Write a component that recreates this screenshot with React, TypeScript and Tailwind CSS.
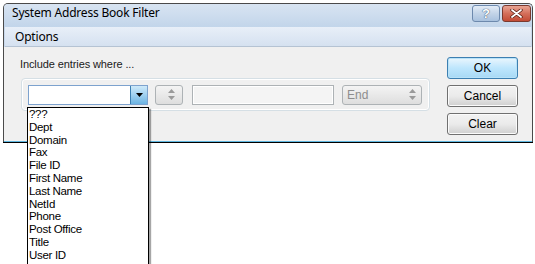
import React from 'react';

const fields = ['???', 'Dept', 'Domain', 'Fax', 'File ID', 'First Name', 'Last Name', 'NetId', 'Phone', 'Post Office', 'Title', 'User ID'];

function UpDown() {
    return (
        <svg width="7" height="11" viewBox="0 0 7 11">
            <polygon points="0,4 3.5,0 7,4" fill="#9a9a9a" />
            <polygon points="0,7 3.5,11 7,7" fill="#9a9a9a" />
        </svg>
    );
}

function WinButton({ label, primary }: { label: string; primary?: boolean }) {
    return (
        <button
            className={
                primary
                    ? 'h-[22px] w-[71px] rounded-[3px] border border-[#3c7fb1] bg-gradient-to-b from-[#eaf6fd] via-[#bee6fd] to-[#a7d9f5] text-[12px] text-black shadow-[inset_0_0_0_1px_#b8e2f8]'
                    : 'h-[22px] w-[71px] rounded-[3px] border border-[#707070] bg-gradient-to-b from-[#f2f2f2] via-[#ebebeb] to-[#cfcfcf] text-[12px] text-black shadow-[inset_0_0_0_1px_#fbfbfb]'
            }
        >
            {label}
        </button>
    );
}

export default function App() {
    return (
        <div className="relative w-[535px] h-[264px] bg-white font-['Liberation_Sans',Arial,sans-serif] text-black">
            {/* window */}
            <div className="ml-[3px] mt-[3px] w-[530px] h-[139px] border border-[#4a4a4a] border-b-0 rounded-t-[5px] bg-[#c9d9ec] flex flex-col">
                <div className="h-[23px] flex items-start justify-between pl-[8px] pr-[1px] pt-[1px] rounded-t-[4px] bg-gradient-to-b from-[#d8e4f2] to-[#c2d5ea]">
                    <span className="text-[12px] leading-[16px] font-['Noto_Sans',sans-serif] tracking-[-0.2px] text-black">System Address Book Filter</span>
                    <div className="flex gap-[2px]">
                        <div className="w-[28px] h-[17px] rounded-[3px] border border-[#6d89ad] bg-gradient-to-b from-[#e3ecf6] via-[#c3d4e8] to-[#a9c1de] flex items-center justify-center">
                            <span className="text-[13px] leading-none font-bold text-white [text-shadow:0_0_1px_#3a4f6e,0_0_1px_#3a4f6e]">?</span>
                        </div>
                        <div className="w-[29px] h-[17px] rounded-[3px] border border-[#7a3a2f] bg-gradient-to-b from-[#e8a493] via-[#d46f5b] to-[#c24b35] flex items-center justify-center">
                            <svg width="13" height="9" viewBox="0 0 13 9">
                                <path d="M2 1 L11 8 M11 1 L2 8" stroke="#5a2015" strokeWidth="3.4" strokeLinecap="round" />
                                <path d="M2 1 L11 8 M11 1 L2 8" stroke="#ffffff" strokeWidth="1.8" strokeLinecap="round" />
                            </svg>
                        </div>
                    </div>
                </div>
                <div className="h-[20px] flex items-center pl-[10px] mx-[1px] border-b border-[#b5c3d3] bg-gradient-to-b from-[#e8eff8] to-[#d5e1f0]">
                    <span className="text-[12px] font-['Noto_Sans',sans-serif] tracking-[-0.2px] text-black">Options</span>
                </div>
                <div className="flex-1 bg-[#f0f0f0] border-b border-[#5fb7e0] flex">
                    <div className="pl-[16px] pt-[11px]">
                        <div className="text-[11px] leading-[13px] text-[#1a1a1a] tracking-[-0.1px]">Include entries where ...</div>
                        <div className="ml-[1px] mt-[7px] w-[409px] h-[33px] rounded-[4px] border border-[#d5dfe5] shadow-[inset_0_0_0_1px_#ffffff] flex items-center pl-[6px] gap-[7px]">
                            <div className="w-[120px] h-[20px] border border-[#7da2ce] bg-white flex justify-end">
                                <div className="w-[17px] h-full border-l border-[#3c7fb1] bg-gradient-to-b from-[#cde9f9] via-[#9fd0f0] to-[#6cb4e2] flex items-center justify-center">
                                    <svg width="7" height="4" viewBox="0 0 7 4">
                                        <polygon points="0,0 7,0 3.5,4" fill="#000" />
                                    </svg>
                                </div>
                            </div>
                            <div className="w-[28px] h-[20px] rounded-[3px] border border-[#adb2b5] bg-gradient-to-b from-[#f4f4f4] to-[#dedede] flex items-center justify-end pr-[7px]">
                                <UpDown />
                            </div>
                            <div className="ml-[2px] w-[142px] h-[20px] border border-[#adb2b5] bg-[#f4f4f4] shadow-[inset_0_0_0_1px_#ffffff]" />
                            <div className="ml-[1px] w-[80px] h-[20px] rounded-[3px] border border-[#adb2b5] bg-gradient-to-b from-[#f4f4f4] to-[#dedede] flex items-center justify-between pl-[4px] pr-[5px]">
                                <span className="text-[12px] text-[#8d8d8d]">End</span>
                                <UpDown />
                            </div>
                        </div>
                    </div>
                    <div className="ml-[17px] pt-[10px] flex flex-col gap-[6px]">
                        <WinButton label="OK" primary />
                        <WinButton label="Cancel" />
                        <WinButton label="Clear" />
                    </div>
                </div>
            </div>
            <div className="h-[1px] ml-[3px] w-[530px] bg-black" />

            {/* open dropdown list */}
            <div className="absolute left-[27px] top-[104px] w-[122px] h-[158px] bg-white border border-black shadow-[2px_2px_1px_rgba(0,0,0,0.35)] overflow-hidden">
                {fields.map((f) => (
                    <div key={f} className="h-[12.8px] leading-[12px] pl-[1px] text-[11.5px] tracking-[-0.3px]">
                        {f}
                    </div>
                ))}
            </div>
        </div>
    );
}
